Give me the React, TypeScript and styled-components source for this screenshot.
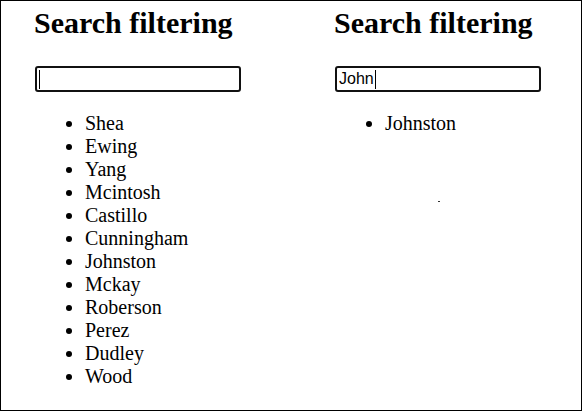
import styled, { createGlobalStyle } from "styled-components";

const GlobalStyle = createGlobalStyle`
  html, body {
    margin: 0;
    padding: 0;
    background: #fff;
  }
  body {
    font-family: "Liberation Serif", "Times New Roman", serif;
    font-size: 20px;
    color: #000;
  }
`;

const Frame = styled.div`
  position: relative;
  box-sizing: border-box;
  width: 582px;
  height: 411px;
  border: 1px solid #000;
  display: grid;
  grid-template-columns: 300px 1fr;
  padding-left: 34px;
`;

const Column = styled.section`
  display: flex;
  flex-direction: column;
  align-items: flex-start;
`;

const Title = styled.h2`
  font-size: 30px;
  font-weight: bold;
  margin: 5px 0 25px -1px;
  line-height: 34.5px;
`;

const InputWrap = styled.div`
  position: relative;
`;

const SearchInput = styled.input`
  box-sizing: border-box;
  width: 206px;
  height: 26px;
  border: 2px solid #111;
  border-radius: 3px;
  padding: 0 2px;
  font-family: "Liberation Sans", Arial, sans-serif;
  font-size: 16px;
  color: #000;
  caret-color: transparent;
  outline: none;
`;

const Caret = styled.span<{ $left: number }>`
  position: absolute;
  left: ${({ $left }) => $left}px;
  top: 4px;
  width: 1px;
  height: 19px;
  background: #000;
`;

const NameList = styled.ul`
  margin: 20px 0 0 0;
  padding-left: 50px;
  list-style: disc;
`;

const Name = styled.li`
  line-height: 23px;
`;

const Speck = styled.span`
  position: absolute;
  left: 437px;
  top: 200px;
  width: 2px;
  height: 1px;
  background: #333;
`;

const names = [
  "Shea",
  "Ewing",
  "Yang",
  "Mcintosh",
  "Castillo",
  "Cunningham",
  "Johnston",
  "Mckay",
  "Roberson",
  "Perez",
  "Dudley",
  "Wood",
];

function FilterPanel({ query, caretLeft }: { query: string; caretLeft: number }) {
  const shown = names.filter((n) =>
    n.toLowerCase().includes(query.toLowerCase())
  );
  return (
    <Column>
      <Title>Search filtering</Title>
      <InputWrap>
        <SearchInput type="text" defaultValue={query} />
        <Caret $left={caretLeft} />
      </InputWrap>
      <NameList>
        {shown.map((n) => (
          <Name key={n}>{n}</Name>
        ))}
      </NameList>
    </Column>
  );
}

export default function App() {
  return (
    <>
      <GlobalStyle />
      <Frame>
        <FilterPanel query="" caretLeft={4} />
        <FilterPanel query="John" caretLeft={40} />
        <Speck />
      </Frame>
    </>
  );
}
